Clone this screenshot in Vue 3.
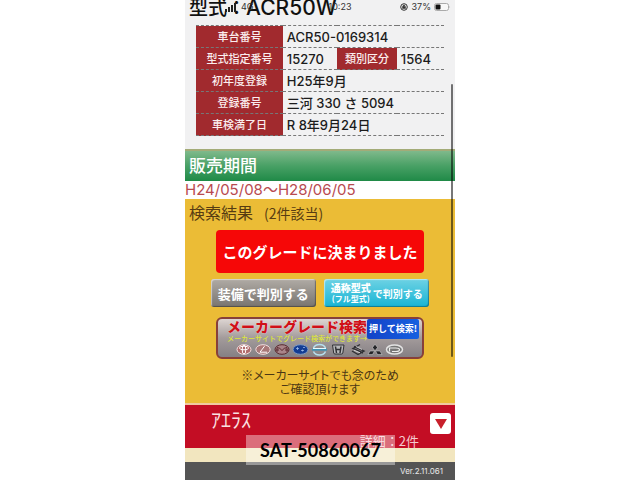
<script setup>
const rows = [
  { label: '初年度登録', value: 'H25年9月' },
  { label: '登録番号', value: '三河 330 さ 5094' },
  { label: '車検満了日', value: 'R 8年9月24日' },
]
</script>

<template>
  <main class="phone">
    <header class="top">
      <h1>型式：<span>ACR50W</span></h1>
      <div class="status">
        <span class="carrier">
          <svg width="13" height="9" viewBox="0 0 13 9" aria-hidden="true">
            <path d="M0 6h2v3H0zM3 4h2v5H3zM6 2h2v7H6zM9 0h2v9H9z" fill="#222" />
          </svg>
          4G
        </span>
        <span class="time">10:23</span>
        <span class="power">
          <svg width="8" height="8" viewBox="0 0 8 8" aria-hidden="true">
            <circle cx="4" cy="4" r="3.3" fill="none" stroke="#333" />
            <path d="M2.5 3.5h3v2h-3zM3 3.5V3a1 1 0 0 1 2 0" fill="#333" stroke="#333" stroke-width=".5" />
          </svg>
          37%
          <svg width="17" height="8" viewBox="0 0 17 8" aria-hidden="true">
            <rect x=".5" y=".5" width="14" height="7" rx="2" fill="#f8f8f8" stroke="#aaa" />
            <rect x="1.5" y="1.5" width="5" height="5" rx="1" fill="#111" />
            <path d="M15.5 2.7q1.2 1.3 0 2.6z" fill="#aaa" />
          </svg>
        </span>
      </div>
    </header>

    <table class="spec">
      <colgroup>
        <col class="c1" /><col class="c2" /><col class="c3" /><col />
      </colgroup>
      <tbody>
        <tr>
          <th scope="row">車台番号</th>
          <td colspan="3">ACR50-0169314</td>
        </tr>
        <tr>
          <th scope="row">型式指定番号</th>
          <td>15270</td>
          <th scope="row">類別区分</th>
          <td>1564</td>
        </tr>
        <tr v-for="row in rows" :key="row.label">
          <th scope="row">{{ row.label }}</th>
          <td colspan="3">{{ row.value }}</td>
        </tr>
      </tbody>
    </table>

    <h2 class="period-head">販売期間</h2>
    <p class="period">H24/05/08〜H28/06/05</p>

    <section class="result">
      <h2 class="result-head">検索結果 <small>(2件該当)</small></h2>
      <button type="button" class="decided">このグレードに決まりました</button>
      <div class="pair">
        <button type="button" class="equip">装備で判別する</button>
        <button type="button" class="model">
          <span class="stack"><b>通称型式</b><span>(フル型式)</span></span>
          <span>で判別する</span>
        </button>
      </div>
      <button type="button" class="maker">
        <span class="maker-row">
          <span class="maker-text">
            <span class="maker-title">メーカーグレード検索</span>
            <span class="maker-sub">メーカーサイトでグレード検索ができます→</span>
          </span>
          <span class="push">押して検索!</span>
        </span>
        <svg class="logos" width="170" height="13" viewBox="0 0 170 13" aria-hidden="true">
          <g fill="none" stroke="#f3dfdf">
            <g>
              <ellipse cx="9" cy="6.5" rx="7" ry="4.8" fill="#b06a6a" />
              <ellipse cx="9" cy="5" rx="4.6" ry="1.8" stroke="#fff" />
              <ellipse cx="9" cy="6.5" rx="1.8" ry="4.5" stroke="#fff" />
            </g>
            <g>
              <ellipse cx="28" cy="6.5" rx="7.2" ry="4.8" fill="#a87878" />
              <path d="M29.5 3.2 25 9.2h7" stroke="#fff" />
            </g>
            <g stroke="#5a2a30">
              <ellipse cx="47" cy="6.5" rx="7" ry="4.8" fill="#a98488" />
              <path d="M42 9V4.5q3 .2 5 3 2-2.800 5-3V9M40.500 7h3.500M50 7h3.500" />
            </g>
            <g>
              <ellipse cx="65.500" cy="6.500" rx="7.500" ry="4.800" fill="#123c94" stroke="#7d9ac5" />
              <path d="M61 5.500h3M62.500 4v3M66 7.500h3M67.500 6.500v2M68 4.500h2" stroke="#a9c4ee" stroke-width=".7" />
            </g>
            <g>
              <path d="M78.500 5a6.300 5 0 0 1 12 0M78.500 8.500a6.300 5 0 0 0 12 0" stroke="#b5dfee" stroke-width="1.500" />
              <path d="M77 6.700h15" stroke="#3f93b4" stroke-width="2" />
              <path d="M78 5.500h13" stroke="#e9faff" />
            </g>
            <g stroke="#303034">
              <path d="M97.500 2h11.500l-1.200 8q-.3 1-1.300 1h-6.500q-1 0-1.300-1z" fill="#b8b8ba" />
              <path d="M100.500 3.500 101.500 10M106 3.500 105 10M101.300 6.500h4" stroke-width="1.500" />
            </g>
            <g stroke="#303034">
              <path d="M125 1.500 118 5.500l10 4.500M117 8l6 3.500 6-3.500-10-4.500" stroke-width="1.400" />
              <path d="M119 7.200 125 9.800M121 3.500l6 3" stroke="#e8e8e8" stroke-width=".8" />
            </g>
          </g>
          <path d="m140 1.200 2.500 3.300L140 7.800l-2.500-3.300zM139.500 8l-2 3.600h-4.500l2-3.600zM140.500 8l2 3.600h4.500L145 8z" fill="#242428" stroke="#ddd" stroke-width=".5" />
          <g fill="none">
            <ellipse cx="159.500" cy="6.500" rx="8" ry="4.600" fill="#777" stroke="#e4e4e4" stroke-width="1.500" />
            <path d="M154.500 8.500V5h6q4 0 4 1.800t-4 1.700h-3.500" stroke="#eee" stroke-width="1.200" />
          </g>
        </svg>
      </button>
      <p class="note">※メーカーサイトでも念のため<br />ご確認頂けます</p>
    </section>

    <section class="grade">
      <h3>ｱｴﾗｽ</h3>
      <button type="button" class="toggle" aria-label="詳細">
        <svg width="12" height="12" viewBox="0 0 12 12" aria-hidden="true"><path d="M0 1h12L6 11z" fill="#c8202c" /></svg>
      </button>
      <p>詳細：2件</p>
    </section>
    <div class="cream"></div>
    <footer>Ver.2.11.061</footer>

    <div class="scrollbar"></div>
    <div class="watermark">SAT-50860067</div>
  </main>
</template>

<style>
body {
  background: #fff;
  overflow: hidden;
}
</style>

<style scoped>
.phone {
  position: relative;
  width: 100%;
  max-width: 270px;
  margin: 0 auto;
  background: #f1f1f2;
  color: #1c1c1c;
  font-family: Inter, "Noto Sans CJK JP", sans-serif;
}
h1, h2, h3, p {
  margin: 0;
}
button {
  border: 0;
  padding: 0;
  font-family: "Noto Sans CJK JP", sans-serif;
  color: #fff;
  white-space: nowrap;
}
.top {
  position: relative;
  height: 25px;
}
h1 {
  padding-left: 4px;
  font-size: 19px;
  font-weight: 500;
  line-height: 16px;
  color: #111;
  white-space: nowrap;
}
h1 span {
  font-size: 21px;
}
.status {
  position: absolute;
  inset: 0 4px auto 40px;
  display: flex;
  justify-content: space-between;
  font-size: 9px;
  line-height: 14px;
  color: #333;
}
.carrier, .power {
  display: flex;
  align-items: center;
  gap: 3px;
}
.time {
  padding-left: 26px;
}
.spec {
  width: calc(100% - 22px);
  margin: 0 11px;
  table-layout: fixed;
  border-collapse: collapse;
  border-top: 1px dashed #777;
}
.c1 { width: 35%; }
.c2 { width: 22%; }
.c3 { width: 24%; }
.spec tr {
  height: 22px;
  border-bottom: 1px dashed #777;
}
.spec th {
  padding: 0;
  background: #a12a2e;
  color: #fbeeee;
  font-size: 11px;
  font-weight: 500;
  line-height: 20px;
}
.spec td {
  padding: 0 0 0 4px;
  font-size: 13px;
  font-weight: 500;
  line-height: 20px;
  white-space: nowrap;
}
.period-head {
  margin-top: 13px;
  padding: 0 4px;
  border-top: 2px solid #a3ab78;
  background: linear-gradient(#7fb98b, #48a065 50%, #1f8a47);
  color: #fff;
  font-size: 17px;
  font-weight: 500;
  line-height: 30px;
}
.period {
  background: #fff;
  color: #b84a50;
  font-size: 15px;
  line-height: 18px;
}
.result {
  display: flex;
  flex-direction: column;
  align-items: center;
  height: 204px;
  border-bottom: 2px solid #f0c9a0;
  background: #ebbc36;
}
.result-head {
  align-self: stretch;
  display: flex;
  align-items: baseline;
  gap: 11px;
  padding: 0 4px;
  color: #573c12;
  font-family: "Noto Sans CJK JP", sans-serif;
  font-size: 16px;
  font-weight: 400;
  line-height: 26px;
}
.result-head small {
  font-size: 14px;
}
.decided {
  width: 77%;
  height: 43px;
  margin-top: 4px;
  border-radius: 4px;
  background: #f60707;
  font-size: 15px;
  font-weight: 700;
}
.pair {
  display: grid;
  grid-template-columns: 1fr 1fr;
  gap: 8px;
  width: 81%;
  margin-top: 6px;
}
.equip, .model {
  height: 28px;
  border-radius: 3px;
  box-shadow: inset -1px -1px 1px #0005, inset 1px 1px 1px #fff8;
  font-weight: 700;
}
.equip {
  background: linear-gradient(#b0aba5, #78746f);
  font-size: 13px;
}
.model {
  display: flex;
  align-items: center;
  justify-content: center;
  gap: 2px;
  background: linear-gradient(#6ed2e4, #17b4d4);
  font-size: 10px;
}
.stack {
  display: flex;
  flex-direction: column;
  align-items: center;
  font-size: 8px;
  line-height: 11px;
}
.stack b {
  font-size: 10px;
  font-weight: 900;
}
.maker {
  display: flex;
  flex-direction: column;
  align-items: center;
  width: 77%;
  height: 42px;
  margin-top: 10px;
  border: 2px solid #87403a;
  border-radius: 6px;
  background: linear-gradient(#ddd5d2, #a39b9b 50%, #858084);
}
.maker-row {
  display: flex;
  align-self: stretch;
  justify-content: space-between;
  padding: 0 4px 0 9px;
}
.maker-text {
  display: flex;
  flex-direction: column;
  text-align: left;
}
.maker-title {
  color: #cf1018;
  font-size: 14px;
  font-weight: 900;
  line-height: 15px;
  text-shadow: 0 0 1px #fff;
}
.maker-sub {
  color: #dde63a;
  font-size: 7px;
  font-weight: 500;
  line-height: 9px;
}
.push {
  height: 20px;
  padding: 0 2px;
  border-radius: 2px;
  background: linear-gradient(90deg, #1243c8, #1660e0);
  font-size: 9px;
  font-weight: 700;
  line-height: 20px;
}
.logos {
  display: block;
}
.note {
  margin-top: 9px;
  color: #4b3714;
  font-family: "Noto Sans CJK JP", sans-serif;
  font-size: 12px;
  font-feature-settings: "palt";
  line-height: 14px;
  text-align: center;
}
.grade {
  display: grid;
  grid-template-columns: 1fr auto;
  align-items: center;
  height: 43px;
  padding: 0 4px 0 26px;
  background: #c30d24;
  color: #fbe0e2;
  font-family: "Noto Sans CJK JP", sans-serif;
}
.grade h3 {
  font-size: 20px;
  font-weight: 400;
  line-height: 28px;
}
.grade p {
  grid-column: 1 / -1;
  padding-right: 32px;
  color: #f5c9cf;
  font-size: 13px;
  line-height: 14px;
  text-align: right;
}
.toggle {
  display: grid;
  place-items: center;
  width: 21px;
  height: 21px;
  margin-top: 8px;
  border-radius: 3px;
  background: #fff;
}
.cream {
  height: 14px;
  background: #f2e6bf;
}
footer {
  padding-right: 12px;
  background: #555;
  color: #e8e8e8;
  font-size: 8px;
  line-height: 18px;
  text-align: right;
}
.scrollbar {
  position: absolute;
  top: 84px;
  right: 2px;
  width: 2px;
  height: 273px;
  border-radius: 1px;
  background: #0008;
}
.watermark {
  position: absolute;
  right: 60px;
  bottom: 15px;
  left: 61px;
  background: #fff6;
  color: #000;
  font: 700 18px/30px Lato, sans-serif;
  text-align: center;
}
</style>
